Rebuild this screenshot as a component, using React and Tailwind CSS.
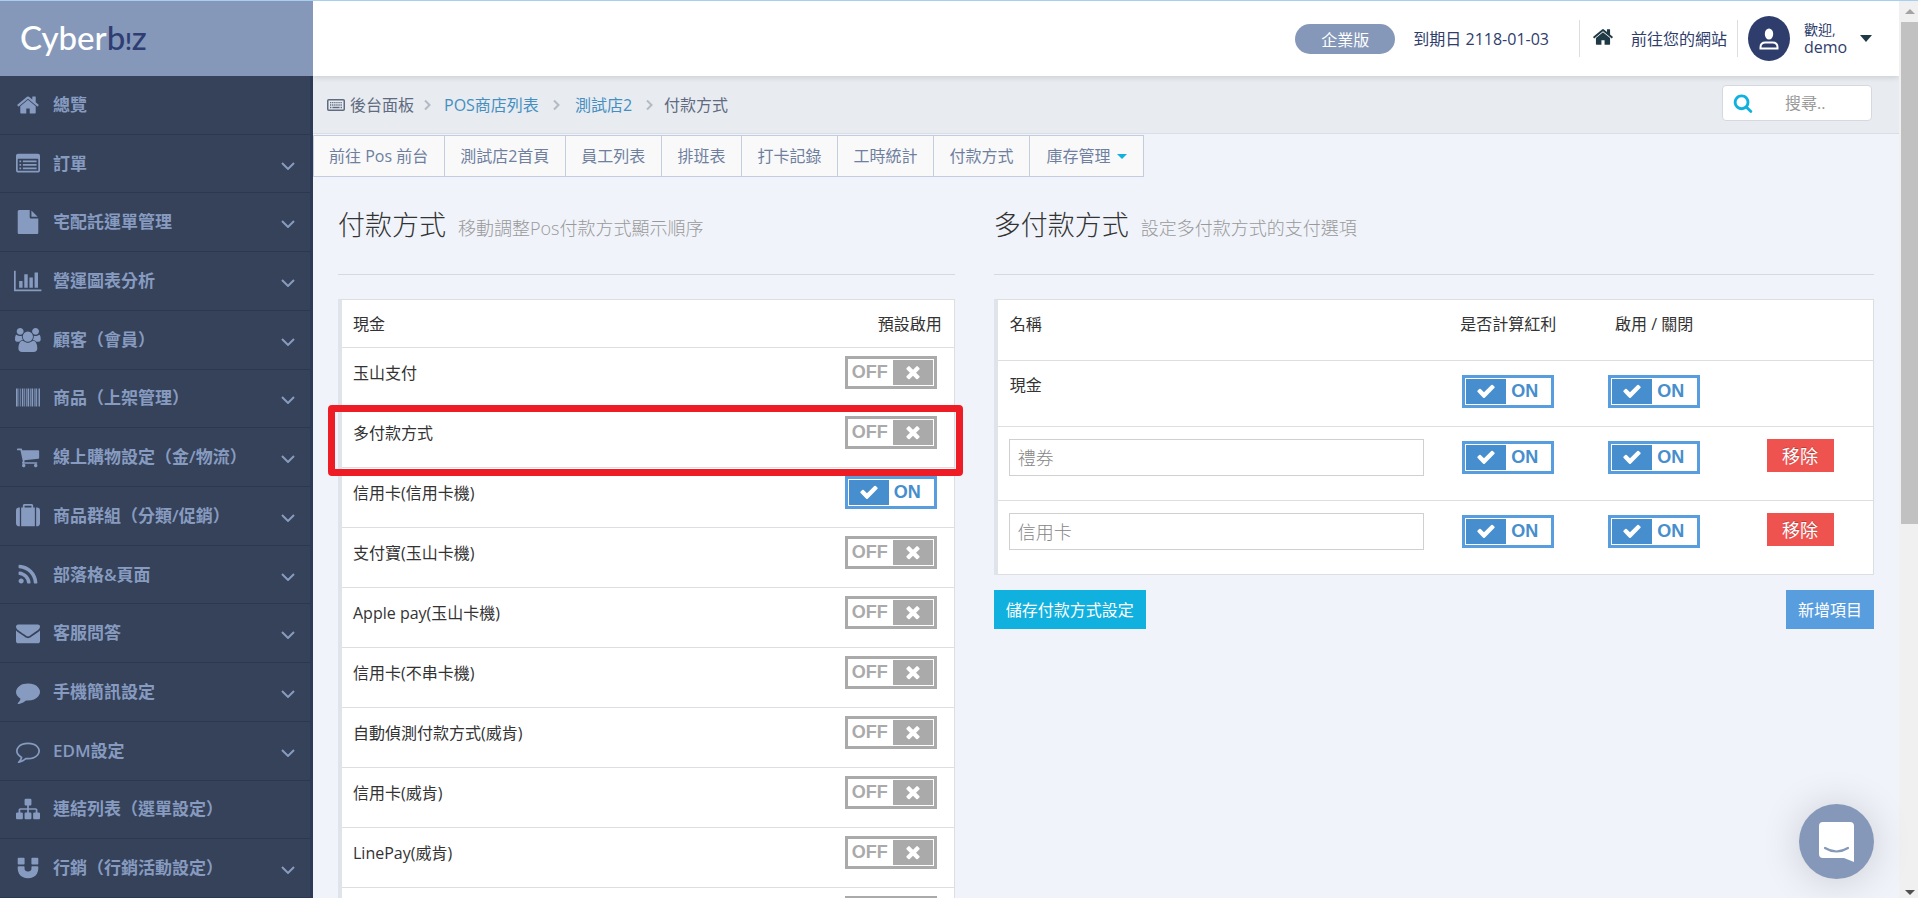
import React, { useState } from "react";

const paths = {
  home: "M1472 992v480q0 26-19 45t-45 19h-384v-384h-256v384h-384q-26 0-45-19t-19-45v-480q0-1 .5-3t.5-3l575-474 575 474q1 2 1 6zm223-69l-62 74q-8 9-21 11h-3q-13 0-21-7l-692-577-692 577q-12 8-24 7-13-2-21-11l-62-74q-8-10-7-23.5t11-21.5l719-599q32-26 76-26t76 26l244 204v-195q0-14 9-23t23-9h192q14 0 23 9t9 23v408l219 182q10 8 11 21.5t-7 23.5z",
  list: "M256 1152h128v128h-128zM256 896h128v128h-128zM256 640h128v128h-128zM512 1152h1024v128h-1024zM512 896h1024v128h-1024zM512 640h1024v128h-1024zM1664 1376v-832q0-13-9.5-22.5t-22.5-9.5h-1472q-13 0-22.5 9.5t-9.5 22.5v832q0 13 9.5 22.5t22.5 9.5h1472q13 0 22.5-9.5t9.5-22.5zm128-1088v1088q0 66-47 113t-113 47h-1472q-66 0-113-47t-47-113v-1088q0-66 47-113t113-47h1472q66 0 113 47t47 113z",
  file: "M1152 512v-472q22 14 36 28l408 408q14 14 28 36h-472zm-128 32q0 40 28 68t68 28h544v1056q0 40-28 68t-68 28h-1344q-40 0-68-28t-28-68v-1600q0-40 28-68t68-28h800v544z",
  chart: "M640 896v512h-256v-512h256zm384-512v1024h-256v-1024h256zm1024 1152v128h-2048v-1536h128v1408h1920zm-640-896v768h-256v-768h256zm384-384v1152h-256v-1152h256z",
  users: "M593 896q-162 5-265 128h-134q-82 0-138-40.5t-56-118.5q0-353 124-353 6 0 43.5 21t97.5 42.5 119 21.5q67 0 133-23-5 37-5 66 0 139 81 256zm1071 637q0 120-73 189.5t-194 69.5h-874q-121 0-194-69.5t-73-189.5q0-53 3.5-103.5t14-109 26.5-108.5 43-97.5 62-81 85.5-53.5 111.5-20q10 0 43 21.5t73 48 107 48 135 21.5 135-21.5 107-48 73-48 43-21.5q61 0 111.5 20t85.5 53.5 62 81 43 97.5 26.5 108.5 14 109 3.5 103.5zm-1024-1277q0 106-75 181t-181 75-181-75-75-181 75-181 181-75 181 75 75 181zm704 384q0 159-112.5 271.5t-271.5 112.5-271.5-112.5-112.5-271.5 112.5-271.5 271.5-112.5 271.5 112.5 112.5 271.5zm576 225q0 78-56 118.5t-138 40.5h-134q-103-123-265-128 81-117 81-256 0-29-5-66 66 23 133 23 59 0 119-21.5t97.5-42.5 43.5-21q124 0 124 353zm-128-609q0 106-75 181t-181 75-181-75-75-181 75-181 181-75 181 75 75 181z",
  barcode: "M0 192h126v1344h-126zM190 192h48v1344h-48zM300 192h48v1344h-48zM440 192h110v1344h-110zM620 192h60v1344h-60zM740 192h60v1344h-60zM860 192h120v1344h-120zM1040 192h60v1344h-60zM1160 192h110v1344h-110zM1330 192h60v1344h-60zM1450 192h110v1344h-110zM1630 192h50v1344h-50zM1720 192h72v1344h-72z",
  cart: "M704 1536q0 52-38 90t-90 38-90-38-38-90 38-90 90-38 90 38 38 90zm896 0q0 52-38 90t-90 38-90-38-38-90 38-90 90-38 90 38 38 90zm128-1088v512q0 24-16.5 42.5t-40.5 21.5l-1044 122q13 60 13 70 0 16-24 64h920q26 0 45 19t19 45-19 45-45 19h-1024q-26 0-45-19t-19-45q0-11 8-31.5t16-36 21.5-40 15.5-29.5l-177-823h-204q-26 0-45-19t-19-45 19-45 45-19h256q16 0 28.5 6.5t19.5 15.5 13 24.5 8 26 5.5 29.5 4.5 26h1201q26 0 45 19t19 45z",
  suitcase: "M640 256h512v-128h-512v128zm-352 0v1408h-64q-92 0-158-66t-66-158v-960q0-92 66-158t158-66h64zm1120 0v1408h-1024v-1408h128v-160q0-40 28-68t68-28h576q40 0 68 28t28 68v160h128zm384 224v960q0 92-66 158t-158 66h-64v-1408h64q92 0 158 66t66 158z",
  rss: "M576 1344q0 80-56 136t-136 56-136-56-56-136 56-136 136-56 136 56 56 136zm512 123q2 28-17 48-18 21-47 21h-135q-25 0-43-16.5t-20-41.5q-22-229-184.5-391.5t-391.5-184.5q-25-2-41.5-20t-16.5-43v-135q0-29 21-47 17-17 43-17h5q160 13 306 80.5t259 181.5q114 113 181.5 259t80.5 306zm512 2q2 27-18 47-18 20-46 20h-143q-26 0-44.5-17.5t-19.5-42.5q-12-215-101-408.5t-231.5-336-336-231.5-408.5-102q-25-1-42.5-19.5t-17.5-43.5v-143q0-28 20-46 18-18 44-18h3q262 13 501.5 120t425.5 294q187 186 294 425.5t120 501.5z",
  envelope: "M1792 710v794q0 66-47 113t-113 47h-1472q-66 0-113-47t-47-113v-794q44 49 101 87 362 246 497 345 57 42 92.5 65.5t94.5 48 110 24.5h2q51 0 110-24.5t94.5-48 92.5-65.5q170-123 498-345 57-39 100-87zm0-294q0 79-49 151t-122 123q-376 261-468 325-10 7-42.5 31t-54 38.5-52 32.5-57.5 27-50 9h-2q-23 0-50-9t-57.5-27-52-32.5-54-38.5-42.5-31q-91-64-262-182.5t-205-142.5q-62-42-117-115.5t-55-136.5q0-78 41.5-130t118.5-52h1472q65 0 112.5 47t47.5 113z",
  comment: "M1792 896q0 174-120 321.5t-326 233-450 85.5q-70 0-145-8-198 175-460 242-49 14-114 22-17 2-30.5-9t-17.5-29v-1q-3-4-.5-12t2-10 4.5-9.5l6-9 7-8.5 8-9q7-8 31-34.5t34.5-38 31-39.5 32.5-51 27-59 26-76q-157-89-247.5-220t-90.5-281q0-130 71-248.5t191-204.5 286-136.5 348-50.5q244 0 450 85.5t326 233 120 321.5z",
  commentOutline: "M896 384q-204 0-381.5 69.5t-282 187.5-104.5 255q0 112 71.5 213.5t201.5 175.5l87 50-27 96q-24 91-70 172 152-63 275-171l43-38 57 6q69 8 130 8 204 0 381.5-69.5t282-187.5 104.5-255-104.5-255-282-187.5-381.5-69.5zm896 512q0 174-120 321.5t-326 233-450 85.5q-70 0-145-8-198 175-460 242-49 14-114 22h-5q-15 0-27-10.5t-16-27.5v-1q-3-4-.5-12t2-10 4.5-9.5l6-9 7-8.5 8-9q7-8 31-34.5t34.5-38 31-39.5 32.5-51 27-59 26-76q-157-89-247.5-220t-90.5-281q0-174 120-321.5t326-233 450-85.5 450 85.5 326 233 120 321.5z",
  sitemap: "M1792 1248v320q0 40-28 68t-68 28h-320q-40 0-68-28t-28-68v-320q0-40 28-68t68-28h96v-192h-512v192h96q40 0 68 28t28 68v320q0 40-28 68t-68 28h-320q-40 0-68-28t-28-68v-320q0-40 28-68t68-28h96v-192h-512v192h96q40 0 68 28t28 68v320q0 40-28 68t-68 28h-320q-40 0-68-28t-28-68v-320q0-40 28-68t68-28h96v-192q0-52 38-90t90-38h512v-192h-96q-40 0-68-28t-28-68v-320q0-40 28-68t68-28h320q40 0 68 28t28 68v320q0 40-28 68t-68 28h-96v192h512q52 0 90 38t38 90v192h96q40 0 68 28t28 68z",
  magnet: "M1664 832v128q0 201-98.5 362t-274 251.5-395.5 90.5-395.5-90.5-274-251.5-98.5-362v-128q0-26 19-45t45-19h384q26 0 45 19t19 45v128q0 52 23.5 90t53.5 57 71 30 64 13 44 2 44-2 64-13 71-30 53.5-57 23.5-90v-128q0-26 19-45t45-19h384q26 0 45 19t19 45zm-1024-640v384q0 26-19 45t-45 19h-384q-26 0-45-19t-19-45v-384q0-26 19-45t45-19h384q26 0 45 19t19 45zm1024 0v384q0 26-19 45t-45 19h-384q-26 0-45-19t-19-45v-384q0-26 19-45t45-19h384q26 0 45 19t19 45z",
  check: "M1671 566q0 40-28 68l-724 724-136 136q-28 28-68 28t-68-28l-136-136-362-362q-28-28-28-68t28-68l136-136q28-28 68-28t68 28l294 295 656-657q28-28 68-28t68 28l136 136q28 28 28 68z",
  times: "M1490 1322q0 40-28 68l-136 136q-28 28-68 28t-68-28l-294-294-294 294q-28 28-68 28t-68-28l-136-136q-28-28-28-68t28-68l294-294-294-294q-28-28-28-68t28-68l136-136q28-28 68-28t68 28l294 294 294-294q28-28 68-28t68 28l136 136q28 28 28 68t-28 68l-294 294 294 294q28 28 28 68z",
  search: "M1216 832q0-185-131.5-316.5t-316.5-131.5-316.5 131.5-131.5 316.5 131.5 316.5 316.5 131.5 316.5-131.5 131.5-316.5zm512 832q0 52-38 90t-90 38q-54 0-90-38l-343-342q-179 124-399 124-143 0-273.5-55.5t-225-150-150-225-55.5-273.5 55.5-273.5 150-225 225-150 273.5-55.5 273.5 55.5 225 150 150 225 55.5 273.5q0 220-124 399l343 343q37 37 37 90z",
};

const menu = [
  { icon: "home", label: "總覽" },
  { icon: "list", label: "訂單", open: true },
  { icon: "file", label: "宅配託運單管理", open: true },
  { icon: "chart", label: "營運圖表分析", open: true, box: "0 0 2048 1792" },
  { icon: "users", label: "顧客（會員）", open: true, box: "0 0 1920 1792" },
  { icon: "barcode", label: "商品（上架管理）", open: true },
  { icon: "cart", label: "線上購物設定（金/物流）", open: true },
  { icon: "suitcase", label: "商品群組（分類/促銷）", open: true },
  { icon: "rss", label: "部落格&頁面", open: true },
  { icon: "envelope", label: "客服問答", open: true },
  { icon: "comment", label: "手機簡訊設定", open: true },
  { icon: "commentOutline", label: "EDM設定", open: true },
  { icon: "sitemap", label: "連結列表（選單設定）" },
  { icon: "magnet", label: "行銷（行銷活動設定）", open: true },
];

const tabs = ["前往 Pos 前台", "測試店2首頁", "員工列表", "排班表", "打卡記錄", "工時統計", "付款方式"];

const payments = [
  { name: "玉山支付", on: false },
  { name: "多付款方式", on: false, marked: true },
  { name: "信用卡(信用卡機)", on: true },
  { name: "支付寶(玉山卡機)", on: false },
  { name: "Apple pay(玉山卡機)", on: false },
  { name: "信用卡(不串卡機)", on: false },
  { name: "自動偵測付款方式(威肯)", on: false },
  { name: "信用卡(威肯)", on: false },
  { name: "LinePay(威肯)", on: false },
  { name: "", on: false },
];

function Icon({ name, className, box = "0 0 1792 1792" }) {
  return (
    <svg viewBox={box} fill="currentColor" className={className} aria-hidden="true">
      <path d={paths[name]} />
    </svg>
  );
}

function Toggle({ label, defaultOn }) {
  const [on, setOn] = useState(defaultOn);
  return (
    <label
      className={`relative inline-flex h-[33px] w-[92px] border-3 bg-white p-px align-top text-lg leading-6 font-bold font-['Liberation_Sans',sans-serif] ${
        on ? "border-[#589edf] text-[#468ecd]" : "border-[#aaaaaa] text-[#aaaaaa]"
      }`}
    >
      <input
        type="checkbox"
        className="sr-only"
        checked={on}
        onChange={() => setOn(!on)}
        aria-label={label}
      />
      {on ? (
        <>
          <span className="flex w-10 items-center justify-center bg-[#468ecd] pb-0.5 text-white">
            <Icon name="check" className="size-5" />
          </span>
          <span className="pl-[5px]">ON</span>
        </>
      ) : (
        <>
          <span className="w-11 pl-[3px] text-left">OFF</span>
          <span className="flex w-10 items-center justify-center bg-[#aaaaaa] pb-0.5 text-white">
            <Icon name="times" className="size-5" />
          </span>
        </>
      )}
    </label>
  );
}

function Crumb() {
  return (
    <svg viewBox="0 0 8 12" className="h-3 w-2 text-[#b4bac4]" fill="none" stroke="currentColor" strokeWidth="2" aria-hidden="true">
      <path d="M1 1.5 5.5 6 1 10.5" />
    </svg>
  );
}

function Sidebar() {
  return (
    <aside className="flex w-[313px] shrink-0 flex-col bg-[#354259]">
      <div className="flex h-[75px] shrink-0 items-center bg-[#8598b9] pl-5">
        <a href="#" className="text-[33px] leading-9 font-medium text-white font-['Lato',sans-serif]">
          Cyber<span className="text-[#2f3d73]">b<span className="text-[23px] font-bold">!</span>z</span>
        </a>
      </div>
      <nav className="flex min-h-0 flex-1 flex-col border-r-3 border-[#2c3a55]">
        {menu.map((item) => (
          <a
            key={item.label}
            href="#"
            className="flex min-h-0 flex-1 items-center border-b border-[#2b3850] pr-[15px] pl-3.5 text-[17px] leading-6 font-semibold text-[#879bc0]"
          >
            <span className="flex w-7 justify-center">
              <Icon name={item.icon} box={item.box} className="h-6 w-auto" />
            </span>
            <span className="ml-[11px] flex-1 whitespace-nowrap">{item.label}</span>
            {item.open && (
              <svg viewBox="0 0 14 8" className="mt-1 h-2 w-3.5" fill="none" stroke="currentColor" strokeWidth="2" aria-hidden="true">
                <path d="M1 1l6 6 6-6" />
              </svg>
            )}
          </a>
        ))}
      </nav>
    </aside>
  );
}

function Header() {
  return (
    <header className="relative flex h-[75px] shrink-0 items-center justify-end bg-white pr-[27px] text-base text-[#2f3d6d] shadow-[0_1px_6px_rgba(0,0,0,0.15)]">
      <span className="w-[100px] rounded-full bg-[#8598b9] pt-0.5 text-center leading-7 text-white">企業版</span>
      <span className="ml-[18px]">到期日 2118-01-03</span>
      <span className="ml-[30px] h-[37px] w-px bg-[#dddddd]" />
      <a href="#" className="flex items-center">
        <Icon name="home" className="mb-1 ml-3 size-[22px] text-[#1f3a44]" />
        <span className="ml-[17px]">前往您的網站</span>
      </a>
      <span className="ml-2.5 h-[37px] w-px bg-[#dddddd]" />
      <button type="button" className="ml-2.5 flex items-center text-left">
        <span className="flex h-[45px] w-[42px] items-center justify-center rounded-[50%] bg-[#2f3d6d]">
          <svg viewBox="0 0 20 22" className="h-[22px] w-5" aria-hidden="true">
            <ellipse cx="10" cy="6" rx="4.2" ry="5.5" fill="#fff" />
            <path d="M1.5 20.5v-1.3q0-4.7 5-4.7h7q5 0 5 4.7v1.3z" fill="none" stroke="#fff" strokeWidth="2" />
          </svg>
        </span>
        <span className="ml-3.5 flex w-[46px] flex-col leading-4">
          <span className="text-sm leading-4">歡迎,</span>
          <span className="leading-[18px]">demo</span>
        </span>
        <svg viewBox="0 0 12 7" className="ml-2.5 h-[7px] w-3 text-[#1f3a44]" fill="currentColor" aria-hidden="true">
          <path d="M0 0h12L6 7z" />
        </svg>
      </button>
    </header>
  );
}

function Breadcrumb() {
  return (
    <div className="flex h-[58px] shrink-0 items-center border-b border-[#d8dde6] bg-[#e8ebf0] pr-[27px] pl-3.5 text-base text-[#5f6b80]">
      <svg viewBox="0 0 18 12" className="mr-[5px] h-3 w-[18px]" aria-hidden="true">
        <rect x="0.75" y="0.75" width="16.5" height="10.5" rx="1" fill="none" stroke="currentColor" strokeWidth="1.5" />
        <path d="M3 3.7h12M3 6h12" stroke="currentColor" strokeWidth="1.3" strokeDasharray="1.3 0.8" />
        <path d="M3 8.5h1.4M5.4 8.5h7.2M13.6 8.5h1.4" stroke="currentColor" strokeWidth="1.3" />
      </svg>
      <span>後台面板</span>
      <span className="mr-3 ml-2.5"><Crumb /></span>
      <a href="#" className="text-[#458fc0]">POS商店列表</a>
      <span className="mx-3.5"><Crumb /></span>
      <a href="#" className="text-[#458fc0]">測試店2</a>
      <span className="mr-2.5 ml-3.5"><Crumb /></span>
      <span>付款方式</span>
      <label className="mb-1 ml-auto flex h-9 w-[150px] items-center rounded-sm border border-[#d5d8de] bg-white pl-2.5">
        <Icon name="search" className="size-5 shrink-0 text-[#11b1df]" />
        <input
          type="text"
          aria-label="搜尋"
          placeholder="搜尋.."
          className="ml-8 w-full min-w-0 outline-none placeholder:text-[#999999]"
        />
      </label>
    </div>
  );
}

function Tabs() {
  return (
    <nav className="mt-px flex text-base text-[#6f7f9f]">
      {tabs.map((tab) => (
        <a key={tab} href="#" className="-mr-px border border-[#c3cddd] bg-[#f9f9f9] pr-4 pl-[15px] leading-10">
          {tab}
        </a>
      ))}
      <button type="button" className="flex items-center border border-[#c3cddd] bg-[#f9f9f9] px-4 leading-10">
        庫存管理
        <svg viewBox="0 0 10 5" className="ml-[7px] h-[5px] w-2.5 text-[#11b1df]" fill="currentColor" aria-hidden="true">
          <path d="M0 0h10L5 5z" />
        </svg>
      </button>
    </nav>
  );
}

function Title({ title, note }) {
  return (
    <h1 className="mb-6 flex h-[98px] items-baseline gap-3 border-b border-[#d5d9e0] pt-7 text-[27px] leading-10 font-light text-[#333333]">
      {title}
      <small className="text-lg leading-none text-[#999999]">{note}</small>
    </h1>
  );
}

function PaymentList() {
  return (
    <section className="w-5/12 pr-[19px] pl-[25px]">
      <Title title="付款方式" note="移動調整Pos付款方式顯示順序" />
      <div className="border border-b-0 border-l-4 border-[#dcdee2] border-l-[#dfe3ea] bg-white">
        <table className="w-full border-separate border-spacing-0 text-base text-[#333333]">
          <thead>
            <tr>
              <th className="h-12 border-b border-[#dcdee2] pl-[11px] text-left font-normal">現金</th>
              <th className="h-12 border-b border-[#dcdee2] pr-3 text-right font-normal">預設啟用</th>
            </tr>
          </thead>
          <tbody>
            {payments.map((item, i) => (
              <tr key={i} className="relative">
                <td className="h-15 border-b border-[#dcdee2] pt-[13px] pl-[11px] align-top">{item.name}</td>
                <td className="h-15 border-b border-[#dcdee2] pt-2 pr-[17px] text-right align-top">
                  <Toggle label={item.name} defaultOn={item.on} />
                  {item.marked && (
                    <span className="pointer-events-none absolute -top-[3px] -right-[9px] -bottom-2 -left-3.5 z-10 rounded-sm border-7 border-[#ee1c24]" />
                  )}
                </td>
              </tr>
            ))}
          </tbody>
        </table>
      </div>
    </section>
  );
}

function RemoveButton() {
  return (
    <button type="button" className="h-[33px] w-[67px] bg-[#ef5350] text-lg leading-8 text-white [text-shadow:0_-1px_0_rgba(0,0,0,0.25)]">
      移除
    </button>
  );
}

function MultiPayment() {
  const cell = "border-b border-[#dcdee2] align-top";
  const field = "block h-[37px] w-full border border-[#d0d0d0] px-2 pb-0.5 text-lg font-light text-[#858585] outline-none";
  return (
    <section className="w-7/12 pr-[25px] pl-5">
      <Title title="多付款方式" note="設定多付款方式的支付選項" />
      <div className="border border-b-0 border-l-4 border-[#dcdee2] border-l-[#dfe3ea] bg-white">
        <table className="w-full table-fixed border-separate border-spacing-0 text-base text-[#333333]">
          <thead>
            <tr>
              <th className={`${cell} h-[61px] w-1/2 pt-3 pl-3 text-left font-normal`}>名稱</th>
              <th className={`${cell} w-1/6 pt-3 text-center font-normal`}>是否計算紅利</th>
              <th className={`${cell} w-1/6 pt-3 text-center font-normal`}>啟用 / 關閉</th>
              <th className={`${cell} w-1/6`} aria-label="操作" />
            </tr>
          </thead>
          <tbody>
            <tr>
              <td className={`${cell} h-[66px] pt-3 pl-3`}>現金</td>
              <td className={`${cell} pt-3.5 text-center`}><Toggle label="現金 是否計算紅利" defaultOn /></td>
              <td className={`${cell} pt-3.5 text-center`}><Toggle label="現金 啟用" defaultOn /></td>
              <td className={cell} />
            </tr>
            {["禮券", "信用卡"].map((name) => (
              <tr key={name}>
                <td className={`${cell} h-[74px] px-[11px] pt-3`}>
                  <input type="text" aria-label="名稱" defaultValue={name} className={field} />
                </td>
                <td className={`${cell} pt-3.5 text-center`}><Toggle label={`${name} 是否計算紅利`} defaultOn /></td>
                <td className={`${cell} pt-3.5 text-center`}><Toggle label={`${name} 啟用`} defaultOn /></td>
                <td className={`${cell} pt-3 text-center`}><RemoveButton /></td>
              </tr>
            ))}
          </tbody>
        </table>
      </div>
      <div className="mt-[15px] flex justify-between text-base text-white [text-shadow:0_-1px_0_rgba(0,0,0,0.25)]">
        <button type="button" className="h-[39px] bg-[#11b1df] px-3">儲存付款方式設定</button>
        <button type="button" className="h-[39px] bg-[#589edf] px-3">新增項目</button>
      </div>
    </section>
  );
}

function ChatButton() {
  return (
    <button
      type="button"
      aria-label="客服"
      className="fixed right-11 bottom-[19px] flex size-[75px] items-center justify-center rounded-full bg-[#8598b9] shadow-[0_2px_40px_rgba(0,0,0,0.16)]"
    >
      <svg viewBox="0 0 35 40" className="h-10 w-[35px]" aria-hidden="true">
        <path d="M4 0h27q4 0 4 4v36l-10-4H4q-4 0-4-4V4q0-4 4-4z" fill="#fff" />
        <path d="M6 26q11.500 7 23 0" fill="none" stroke="#8598b9" strokeWidth="2.200" strokeLinecap="round" />
      </svg>
    </button>
  );
}

function Scrollbar() {
  return (
    <div className="flex w-[19px] shrink-0 flex-col items-center bg-[#f0f0f0] pl-0.5" aria-hidden="true">
      <div className="flex h-[21px] items-center">
        <svg viewBox="0 0 10 5" className="h-[5px] w-2.5" fill="#a3a3a3"><path d="M0 5h10L5 0z" /></svg>
      </div>
      <div className="h-[56%] w-full bg-[#c1c1c1]" />
      <svg viewBox="0 0 10 5" className="mt-auto mb-[3px] h-[5px] w-2.5" fill="#505050"><path d="M0 0h10L5 5z" /></svg>
    </div>
  );
}

export default function App() {
  return (
    <div className="flex h-screen overflow-hidden border-t border-[#a9cfee] bg-[#f0f3f9] font-['Open_Sans','Noto_Sans_CJK_TC',sans-serif]">
      <Sidebar />
      <div className="flex min-w-0 flex-1 flex-col overflow-hidden">
        <Header />
        <Breadcrumb />
        <Tabs />
        <main className="flex min-h-0 flex-1 items-start">
          <PaymentList />
          <MultiPayment />
        </main>
      </div>
      <Scrollbar />
      <ChatButton />
    </div>
  );
}
